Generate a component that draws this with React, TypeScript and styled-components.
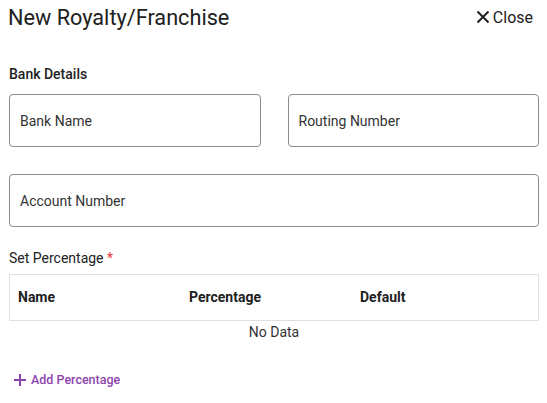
import React from "react";
import styled, { createGlobalStyle } from "styled-components";

const GlobalStyle = createGlobalStyle`
  body {
    margin: 0;
    background: #ffffff;
    font-family: Roboto, "Liberation Sans", Arial, sans-serif;
    color: #212121;
  }
`;

const Page = styled.div`
  width: 547px;
  box-sizing: border-box;
  padding: 0 8px 0 9px;
`;

const Header = styled.div`
  display: flex;
  align-items: center;
  justify-content: space-between;
  height: 34px;
  margin-left: -1px;
`;

const Title = styled.h1`
  margin: 0;
  font-size: 21.7px;
  font-weight: 400;
  color: #202020;
`;

const CloseButton = styled.button`
  display: flex;
  align-items: center;
  gap: 3px;
  border: none;
  background: none;
  padding: 0;
  font-family: inherit;
  font-size: 16px;
  color: #202020;
  margin-right: 6px;
  cursor: pointer;
`;

const SectionLabel = styled.div`
  font-size: 14px;
  font-weight: 500;
  color: #212121;
  margin-top: 32px;
  line-height: 16px;
`;

const FieldGrid = styled.div`
  display: grid;
  grid-template-columns: 1fr 1fr;
  gap: 27px;
  margin-top: 12px;
`;

const Field = styled.div<{ $wide?: boolean }>`
  grid-column: ${(p) => (p.$wide ? "1 / -1" : "auto")};
  height: 53px;
  box-sizing: border-box;
  border: 1px solid #8c8c8c;
  border-radius: 4px;
  display: flex;
  align-items: center;
  padding-left: 10px;
  font-size: 14px;
  color: #333333;
`;

const PercentLabel = styled.div`
  margin-top: 23px;
  font-size: 14px;
  color: #212121;
  line-height: 16px;
`;

const Required = styled.span`
  color: #e53935;
`;

const Table = styled.div`
  margin-top: 8px;
  border: 1px solid #e0e0e0;
  height: 47px;
  box-sizing: border-box;
  display: grid;
  grid-template-columns: 171px 171px 171px 1fr;
  align-items: center;
`;

const HeadCell = styled.div`
  font-size: 14px;
  font-weight: 700;
  color: #212121;
  padding-left: 8px;
  margin-top: -1px;
`;

const Empty = styled.div`
  text-align: center;
  font-size: 14px;
  color: #333333;
  margin-top: 3px;
  line-height: 16px;
`;

const AddButton = styled.button`
  display: flex;
  align-items: center;
  gap: 4px;
  border: none;
  background: none;
  padding: 0;
  margin-top: 32px;
  margin-left: 4px;
  font-family: inherit;
  font-size: 12.5px;
  font-weight: 500;
  color: #8e44ad;
  cursor: pointer;
`;

export default function App() {
  return (
    <>
      <GlobalStyle />
      <Page>
        <Header>
          <Title>New Royalty/Franchise</Title>
          <CloseButton>
            <svg width="14" height="14" viewBox="0 0 14 14">
              <path d="M1.5 1.5 L12.5 12.5 M12.5 1.5 L1.5 12.5" stroke="#202020" strokeWidth="2" />
            </svg>
            Close
          </CloseButton>
        </Header>
        <SectionLabel>Bank Details</SectionLabel>
        <FieldGrid>
          <Field>Bank Name</Field>
          <Field>Routing Number</Field>
          <Field $wide>Account Number</Field>
        </FieldGrid>
        <PercentLabel>
          Set Percentage <Required>*</Required>
        </PercentLabel>
        <Table>
          <HeadCell>Name</HeadCell>
          <HeadCell>Percentage</HeadCell>
          <HeadCell>Default</HeadCell>
          <div />
        </Table>
        <Empty>No Data</Empty>
        <AddButton>
          <svg width="14" height="14" viewBox="0 0 14 14">
            <path d="M7 1 V13 M1 7 H13" stroke="#8e44ad" strokeWidth="2" />
          </svg>
          Add Percentage
        </AddButton>
      </Page>
    </>
  );
}
